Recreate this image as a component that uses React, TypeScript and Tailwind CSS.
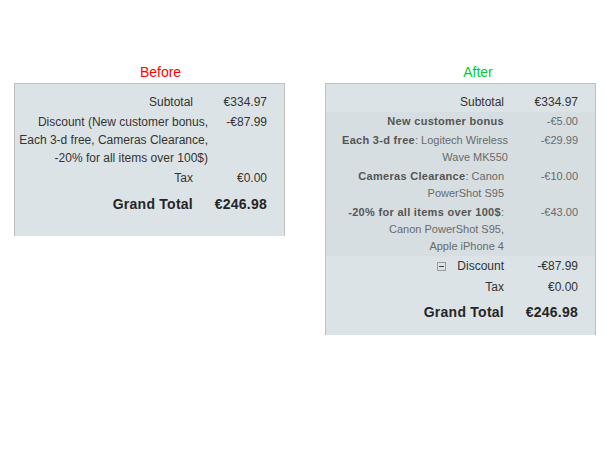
import React from 'react';

type Detail = {
  rule: string;
  items?: React.ReactNode;
  amount: string;
};

const details: Detail[] = [
  { rule: 'New customer bonus', amount: '-€5.00' },
  { rule: 'Each 3-d free', items: <>Logitech Wireless<br />Wave MK550</>, amount: '-€29.99' },
  { rule: 'Cameras Clearance', items: <>Canon<br />PowerShot S95</>, amount: '-€10.00' },
  {
    rule: '-20% for all items over 100$',
    items: <><br />Canon PowerShot S95,<br />Apple iPhone 4</>,
    amount: '-€43.00',
  },
];

const Row: React.FC<{ label: React.ReactNode; value: string; className?: string }> = ({ label, value, className = '' }) => (
  <div className={`flex py-px leading-[18px] ${className}`}>
    <div className="flex-1 text-right">{label}</div>
    <div className="w-[74px] text-right">{value}</div>
  </div>
);

const GrandTotal: React.FC<{ className?: string }> = ({ className = '' }) => (
  <div className={`flex text-[14px] font-bold leading-[20px] tracking-[0.25px] text-[#262626] ${className}`}>
    <div className="flex-1 text-right">Grand Total</div>
    <div className="w-[74px] text-right">€246.98</div>
  </div>
);

const CollapseIcon = () => (
  <svg width="9" height="9" viewBox="0 0 9 9" className="mr-[11px] inline-block align-[-1px]">
    <rect x="0.5" y="0.5" width="8" height="8" fill="none" stroke="#555" strokeDasharray="1 1" />
    <line x1="2" y1="4.5" x2="7" y2="4.5" stroke="#444" />
  </svg>
);

export default function App() {
  return (
    <div className="min-h-[457px] w-[614px] bg-white font-['Liberation_Sans',Arial,sans-serif] text-[12px] text-[#333]">
      <div className="flex items-start gap-[40px] pl-[14px] pt-[64px]">
        {/* Before */}
        <div className="w-[271px]">
          <div className="mb-[3px] pl-[22px] text-center text-[14px] leading-[16px] text-[#ff0000]">Before</div>
          <div className="h-[153px] border-x border-t border-[#bfbfbf] bg-[#dce3e6] pb-[22px] pl-px pr-[17px] pt-[8px]">
            <Row label="Subtotal" value="€334.97" />
            <div className="flex py-px leading-[18px]">
              <div className="mr-[-15px] flex-1 whitespace-nowrap text-right">
                Discount (New customer bonus,
                <br />
                Each 3-d free, Cameras Clearance,
                <br />
                -20% for all items over 100$)
              </div>
              <div className="w-[74px] text-right">-€87.99</div>
            </div>
            <Row label="Tax" value="€0.00" />
            <GrandTotal className="mt-[6px]" />
          </div>
        </div>

        {/* After */}
        <div className="w-[271px]">
          <div className="mb-[3px] pl-[35px] text-center text-[14px] leading-[16px] text-[#00cc33]">After</div>
          <div className="h-[252px] border-x border-t border-[#bfbfbf] bg-[#dce3e6] pt-[8px]">
            <div className="pl-[16px] pr-[17px]">
              <Row label="Subtotal" value="€334.97" />
            </div>
            <div className="bg-[#d6dee1] pl-[16px] pr-[17px] text-[11px] text-[#6a6a6a]">
              {details.map((d) => (
                <div key={d.rule} className="flex py-px leading-[17px]">
                  <div className="flex-1 whitespace-nowrap text-right">
                    <span className="font-bold tracking-[0.3px] text-[#555]">{d.rule}</span>
                    {d.items ? <>: {d.items}</> : null}
                  </div>
                  <div className="w-[74px] text-right">{d.amount}</div>
                </div>
              ))}
            </div>
            <div className="pl-[16px] pr-[17px]">
              <Row
                label={
                  <>
                    <CollapseIcon />
                    Discount
                  </>
                }
                value="-€87.99"
              />
              <Row label="Tax" value="€0.00" className="mt-px" />
              <GrandTotal className="mt-[5px]" />
            </div>
          </div>
        </div>
      </div>
    </div>
  );
}
